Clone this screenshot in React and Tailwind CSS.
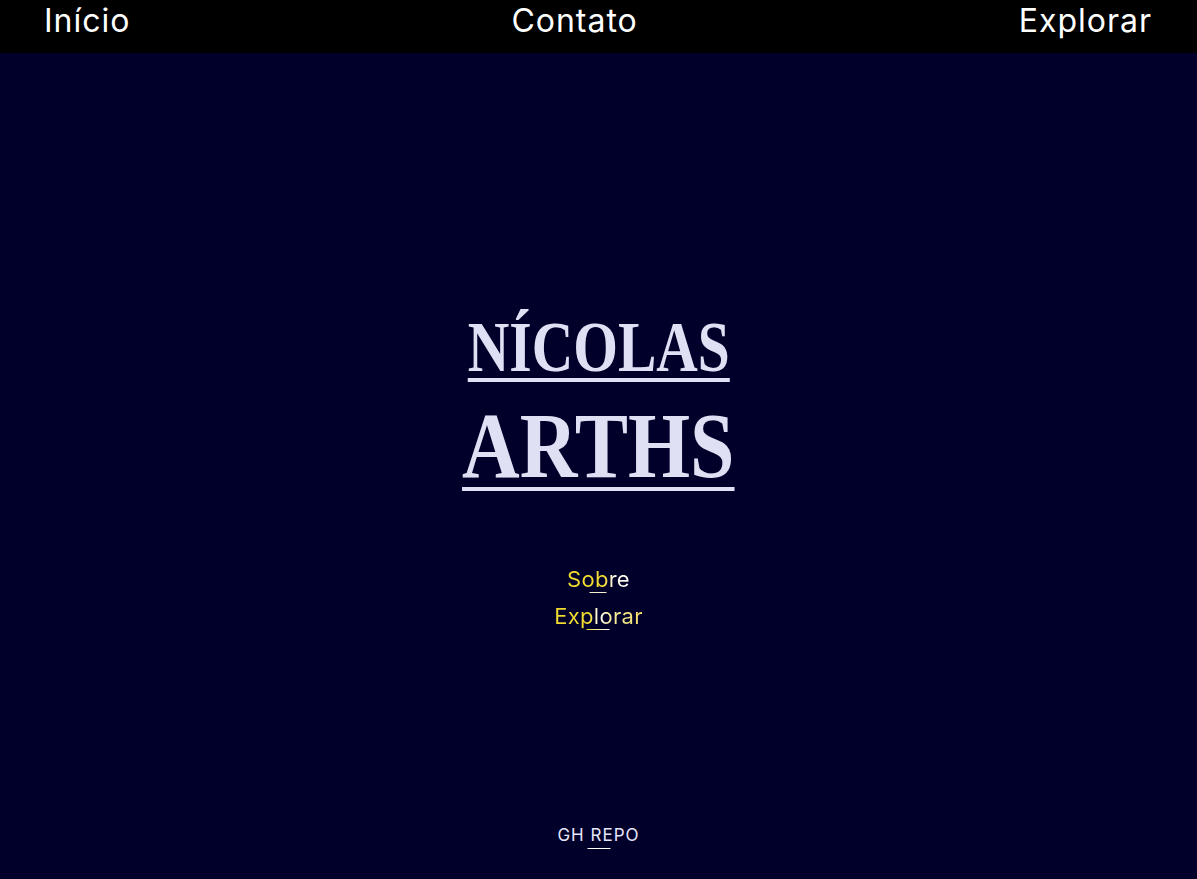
export default function App() {
  const navLinks = ['Início', 'Contato', 'Explorar'];

  return (
    <div className="min-h-screen flex flex-col bg-[#00002a] text-white" style={{ fontFamily: 'Inter, "Open Sans", sans-serif' }}>
      <header className="h-[53px] bg-black flex items-start justify-between pl-[44px] pr-[45px] pt-[5px]">
        {navLinks.map((label) => (
          <a key={label} href="#" className="text-[32px] leading-none tracking-[1px] font-normal text-white">
            {label}
          </a>
        ))}
      </header>

      <main className="flex-1 flex flex-col items-center pt-[259px]">
        <h1
          className="flex flex-col items-center text-[#e0e0f5] leading-none font-bold"
          style={{ fontFamily: '"Liberation Serif", "DejaVu Serif", serif' }}
        >
          <span className="inline-block text-[71px] scale-x-[0.81] underline decoration-[4px] underline-offset-[7px]">NÍCOLAS</span>
          <span className="inline-block text-[94px] scale-x-[0.85] underline decoration-[4px] underline-offset-[10px] mt-[15px]">ARTHS</span>
        </h1>

        <nav className="flex flex-col items-center gap-[12px] mt-[76px]">
          <NavItem
            label="Sobre"
            text="bg-[linear-gradient(90deg,#f3dc30_0%,#f3dc30_60%,#fff8e6_72%,#fffdf5_100%)]"
            line="w-[17px] bg-[#f4efd2]"
          />
          <NavItem
            label="Explorar"
            text="bg-[linear-gradient(90deg,#f3dc30_0%,#f3dc30_40%,#ffffff_50%,#f8eda0_62%,#f3e06a_100%)]"
            line="w-[23px] bg-[linear-gradient(90deg,#f3dc30,#ffffff)]"
          />
        </nav>
      </main>

      <footer className="flex justify-center pb-[30px]">
        <a href="#" className="relative text-[17px] leading-none tracking-[1px] text-[#e6e6fa] pb-[5px]">
          GH REPO
          <span className="absolute left-1/2 -translate-x-1/2 bottom-0 h-[1px] w-[23px] bg-white"></span>
        </a>
      </footer>
    </div>
  );
}

function NavItem({ label, text, line }) {
  return (
    <a href="#" className="relative text-[22px] leading-none tracking-[0.3px] pb-[3px]">
      <span className={`${text} bg-clip-text text-transparent`}>{label}</span>
      <span className={`absolute left-1/2 -translate-x-1/2 bottom-0 h-[1px] ${line}`}></span>
    </a>
  );
}
